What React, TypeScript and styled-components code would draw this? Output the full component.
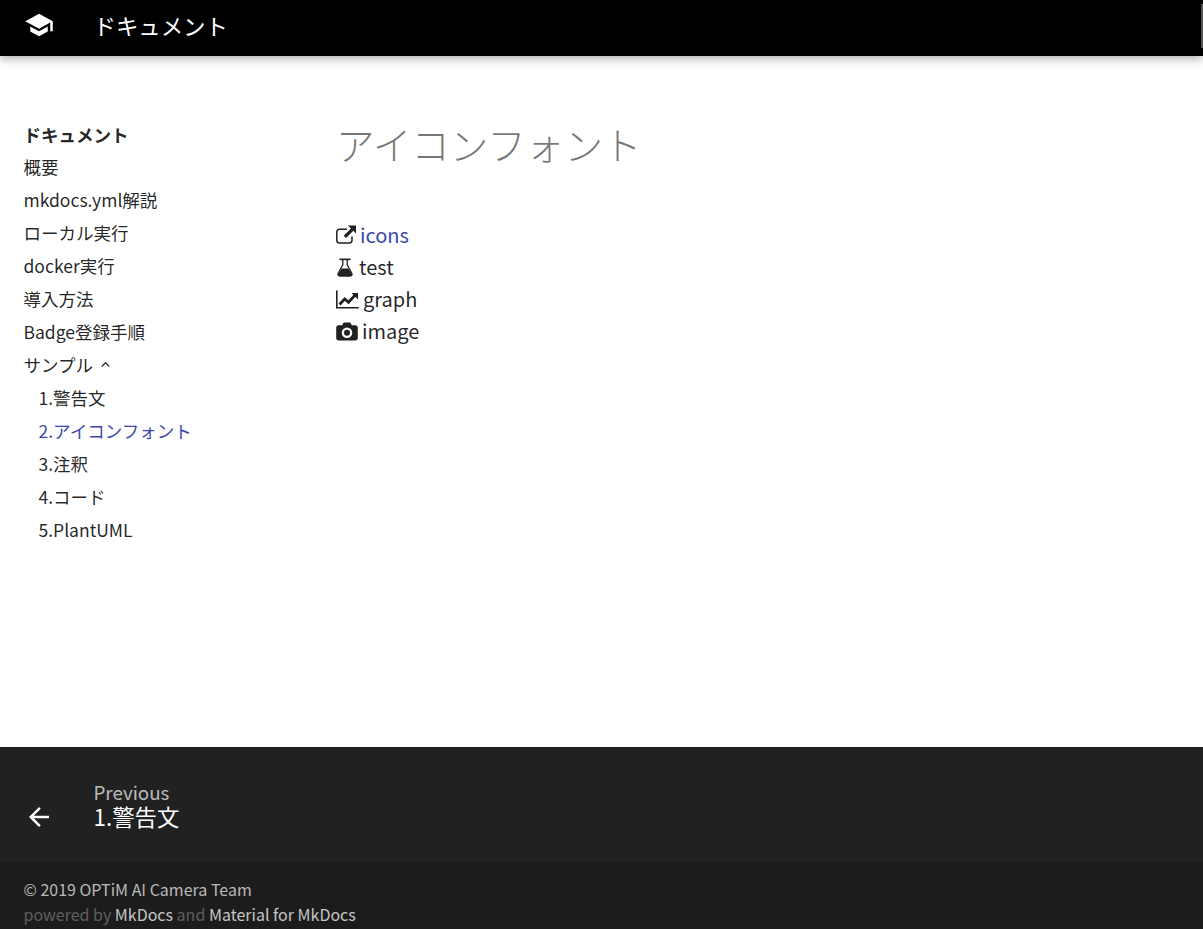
import React from "react";
import styled, { createGlobalStyle } from "styled-components";
import { MdSchool, MdArrowBack, MdKeyboardArrowUp } from "react-icons/md";

const Global = createGlobalStyle`
  *, *::before, *::after { box-sizing: border-box; }
  html, body { margin: 0; padding: 0; background: #fff; }
  body { font-family: "Noto Sans CJK JP", "Noto Sans", sans-serif; color: rgba(0,0,0,.87); overflow: hidden; }
  a { text-decoration: none; color: inherit; }
`;

const Page = styled.div`
  display: flex;
  flex-direction: column;
  height: 929px;
`;

const Header = styled.header`
  flex: none;
  height: 56px;
  background: #000;
  color: #fff;
  display: flex;
  align-items: center;
  padding: 0 0 6px 24px;
  box-shadow: 0 0 8px rgba(0,0,0,.2), 0 4px 10px rgba(0,0,0,.2);
  position: relative;
  z-index: 2;
`;

const Logo = styled.span`
  width: 30px;
  height: 30px;
  font-size: 30px;
  display: flex;
  margin-right: 39.5px;
`;

const HeaderTitle = styled.span`
  font-size: 22.4px;
  line-height: 1;
  font-weight: 400;
`;

const ScrollThumb = styled.span`
  position: absolute;
  right: 0;
  top: 4px;
  width: 2px;
  height: 44px;
  background: #555;
`;

const Main = styled.main`
  flex: 1;
  display: flex;
  padding: 62px 24px 0 23.5px;
`;

const Sidebar = styled.nav`
  width: 312.5px;
  flex: none;
`;

const NavTitle = styled.div`
  font-size: 17.5px;
  line-height: 31.5px;
  padding-top: 1px;
  height: 33px;
  margin-bottom: -1px;
  font-weight: 700;
`;

const NavList = styled.ul<{ $nested?: boolean }>`
  list-style: none;
  margin: 0;
  padding: 0 0 0 ${(p) => (p.$nested ? "15px" : "0")};
`;

const NavItem = styled.li<{ $active?: boolean }>`
  font-size: 17.5px;
  line-height: 33px;
  color: ${(p) => (p.$active ? "#3949ab" : "rgba(0,0,0,.87)")};
  display: flex;
  align-items: center;
  white-space: nowrap;
`;

const Chevron = styled.span`
  display: inline-flex;
  font-size: 17px;
  margin-left: 4px;
  color: rgba(0,0,0,.8);
`;

const Content = styled.article`
  flex: 1;
`;

const Title = styled.h1`
  margin: -2px 0 49px 0;
  font-size: 38.6px;
  line-height: 54px;
  font-weight: 300;
  color: rgba(0,0,0,.54);
`;

const IconLine = styled.div`
  display: flex;
  align-items: center;
  font-size: 20px;
  line-height: 32px;
  gap: 4px;
`;

const IconBox = styled.span`
  display: inline-flex;
  align-items: center;
  color: #212121;
`;

const TextLink = styled.a`
  color: #3949ab;
`;

const Footer = styled.footer`
  flex: none;
  color: #fff;
`;

const PrevBar = styled.div`
  height: 115px;
  background: #212121;
  display: flex;
  align-items: center;
  padding-left: 23.5px;
`;

const BackIcon = styled.span`
  width: 30px;
  font-size: 30px;
  display: flex;
  margin: 24px 40px 0 0;
`;

const PrevText = styled.div`
  display: flex;
  flex-direction: column;
`;

const PrevLabel = styled.span`
  font-size: 18.75px;
  line-height: 24px;
  font-weight: 400;
  color: rgba(255,255,255,.7);
`;

const PrevName = styled.span`
  font-size: 22.4px;
  line-height: 26px;
  margin-top: -1px;
`;

const Meta = styled.div`
  height: 67px;
  background: #1c1c1c;
  padding: 15px 24px 0 23.5px;
  font-size: 16px;
  line-height: 25px;
  color: rgba(255,255,255,.3);
`;

const Copyright = styled.div`
  color: rgba(255,255,255,.7);
`;

const MetaLink = styled.a`
  color: rgba(255,255,255,.75);
`;

const ExternalLinkIcon = () => (
  <svg width="20" height="20" viewBox="0 0 20 20" fill="none">
    <path d="M16 11.500v3.800A2.700 2.700 0 0 1 13.300 18H3.500A2.700 2.700 0 0 1 .8 15.300V7A2.700 2.700 0 0 1 3.500 4.300h7.500" stroke="#212121" strokeWidth="1.500" />
    <path d="M12 .5h8v8l-2.700-2.700-7.300 7.300-2.300-2.300 7.300-7.300z" fill="#212121" />
  </svg>
);

const FlaskIcon = () => (
  <svg width="19" height="19" viewBox="0 0 19 19" fill="none">
    <path d="M3.500.5h11v1.700h-11z" fill="#212121" />
    <path d="M6.800 2v4.800L2.200 15.200c-.8 1.500.2 2.800 1.800 2.800h10c1.600 0 2.600-1.300 1.800-2.800L11.200 6.800V2" stroke="#212121" strokeWidth="1.300" />
    <path d="M5.600 10.500h6.800l3.600 6c.3.900-.2 1.500-1.200 1.500H3.200c-1 0-1.500-.6-1.200-1.500z" fill="#212121" />
  </svg>
);

const ChartIcon = () => (
  <svg width="23" height="19" viewBox="0 0 23 19" fill="none">
    <path d="M.8.500v17.200h22" stroke="#212121" strokeWidth="1.600" />
    <path d="M3.500 14.500l5.200-5.500 3.800 3.200 6.500-7" stroke="#212121" strokeWidth="2.800" />
    <path d="M15.500 3h6.500v6.500z" fill="#212121" />
  </svg>
);

const CameraIcon = () => (
  <svg width="22" height="19" viewBox="0 0 22 19">
    <path d="M7 1.500C7.300.7 8 .4 8.800.4h4.400c.8 0 1.500.3 1.800 1.100l.7 1.700h3.600c1.500 0 2.500 1 2.500 2.500V16c0 1.500-1 2.500-2.500 2.500H2.700C1.200 18.500.2 17.500.2 16V5.700c0-1.500 1-2.500 2.500-2.500h3.600z" fill="#212121" />
    <circle cx="11" cy="10.800" r="5.300" fill="#fff" />
    <circle cx="11" cy="10.800" r="3" fill="#212121" />
  </svg>
);

const mainNav = ["概要", "mkdocs.yml解説", "ローカル実行", "docker実行", "導入方法", "Badge登録手順"];
const subNav = ["1.警告文", "2.アイコンフォント", "3.注釈", "4.コード", "5.PlantUML"];

export default function App() {
  return (
    <Page>
      <Global />
      <Header>
        <Logo><MdSchool /></Logo>
        <HeaderTitle>ドキュメント</HeaderTitle>
        <ScrollThumb />
      </Header>
      <Main>
        <Sidebar>
          <NavTitle>ドキュメント</NavTitle>
          <NavList>
            {mainNav.map((n) => <NavItem key={n}>{n}</NavItem>)}
            <NavItem>サンプル<Chevron><MdKeyboardArrowUp /></Chevron></NavItem>
          </NavList>
          <NavList $nested>
            {subNav.map((n) => <NavItem key={n} $active={n.startsWith("2.")}>{n}</NavItem>)}
          </NavList>
        </Sidebar>
        <Content>
          <Title>アイコンフォント</Title>
          <IconLine><IconBox><ExternalLinkIcon /></IconBox><TextLink href="#">icons</TextLink></IconLine>
          <IconLine><IconBox><FlaskIcon /></IconBox>test</IconLine>
          <IconLine><IconBox><ChartIcon /></IconBox>graph</IconLine>
          <IconLine><IconBox><CameraIcon /></IconBox>image</IconLine>
        </Content>
      </Main>
      <Footer>
        <PrevBar>
          <BackIcon><MdArrowBack /></BackIcon>
          <PrevText>
            <PrevLabel>Previous</PrevLabel>
            <PrevName>1.警告文</PrevName>
          </PrevText>
        </PrevBar>
        <Meta>
          <Copyright>© 2019 OPTiM AI Camera Team</Copyright>
          <div>powered by <MetaLink href="#">MkDocs</MetaLink> and <MetaLink href="#">Material for MkDocs</MetaLink></div>
        </Meta>
      </Footer>
    </Page>
  );
}
